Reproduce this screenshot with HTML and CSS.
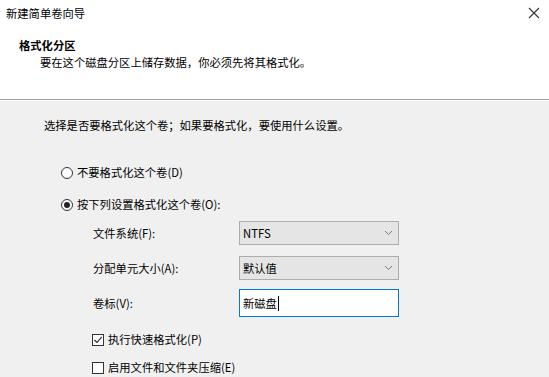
FILE: index.html
```html
<!DOCTYPE html>
<html lang="zh">
<head>
<meta charset="UTF-8">
<title>新建简单卷向导</title>
<link rel="stylesheet" href="styles.css">
</head>
<body>

<div class="titlebar">
  <span class="title">新建简单卷向导</span>
  <svg class="close" width="12" height="12" viewBox="0 0 12 12">
    <path d="M1 1 L11 11 M11 1 L1 11" stroke="#333" stroke-width="1.1" fill="none"/>
  </svg>
</div>

<!-- 页头 -->
<div class="header">
  <div class="header-title">格式化分区</div>
  <div class="header-sub">要在这个磁盘分区上储存数据，你必须先将其格式化。</div>
</div>

<!-- 内容 -->
<div class="content">
  <div class="intro">选择是否要格式化这个卷；如果要格式化，要使用什么设置。</div>

  <div class="radio-row first">
    <span class="radio"></span>
    <span>不要格式化这个卷(D)</span>
  </div>
  <div class="radio-row second">
    <span class="radio checked"></span>
    <span>按下列设置格式化这个卷(O):</span>
  </div>

  <div class="form">
    <div class="label row1">文件系统(F):</div>
    <div class="combo row1">
      <span>NTFS</span>
      <svg width="9" height="6" viewBox="0 0 9 6"><path d="M1 1 L4.5 4.5 L8 1" stroke="#777" fill="none"/></svg>
    </div>
    <div class="label row2">分配单元大小(A):</div>
    <div class="combo row2">
      <span>默认值</span>
      <svg width="9" height="6" viewBox="0 0 9 6"><path d="M1 1 L4.5 4.5 L8 1" stroke="#777" fill="none"/></svg>
    </div>
    <div class="label row3">卷标(V):</div>
    <div class="textbox row3"><span>新磁盘</span><i class="caret"></i></div>
  </div>

  <div class="check-row first">
    <span class="check">
      <svg width="10" height="10" viewBox="0 0 10 10"><path d="M1.5 5 L4 7.5 L8.8 1.8" stroke="#222" stroke-width="1.1" fill="none"/></svg>
    </span>
    <span>执行快速格式化(P)</span>
  </div>
  <div class="check-row second">
    <span class="check"></span>
    <span>启用文件和文件夹压缩(E)</span>
  </div>
</div>

</body>
</html>
```

FILE: styles.css
```css
body {
  margin: 0;
  font-family: "Noto Sans CJK SC", "Liberation Sans", sans-serif;
  font-size: 11.3px;
  color: #000;
  background: #f0f0f0;
  overflow: hidden;
}

.titlebar {
  height: 26px;
  background: #fff;
  display: flex;
  align-items: center;
  justify-content: space-between;
  padding: 0 9px 0 6px;
}

.title {
  line-height: 17px;
}

.header {
  background: #fff;
  padding: 11px 0 28px 19px;
  border-bottom: 1px solid #a0a0a0;
  box-shadow: 0 1px 0 #fff;
}

.header-title {
  font-weight: bold;
  line-height: 17px;
}

.header-sub {
  line-height: 17px;
  padding-left: 21px;
}

.content {
  padding: 17px 0 0 44px;
}

.intro {
  line-height: 17px;
}

.radio-row,
.check-row {
  display: flex;
  align-items: center;
  gap: 4px;
  line-height: 17px;
}

.radio-row { margin-left: 17px; }
.radio-row.first { margin-top: 30px; }
.radio-row.second { margin-top: 15px; }

.radio {
  width: 10px;
  height: 10px;
  border: 1px solid #333;
  border-radius: 50%;
  background: #fff;
  display: flex;
  align-items: center;
  justify-content: center;
}

.radio.checked::after {
  content: "";
  width: 6px;
  height: 6px;
  border-radius: 50%;
  background: #222;
}

.form {
  display: grid;
  grid-template-columns: 146px 160px;
  margin: 8px 0 0 49px;
  align-items: center;
}

.label {
  line-height: 17px;
}

.row1 { grid-row: 1; }
.row2 { grid-row: 2; margin-top: 11px; }
.row3 { grid-row: 3; margin-top: 9px; }

.combo {
  box-sizing: border-box;
  height: 24px;
  background: #e5e5e5;
  border: 1px solid #adadad;
  display: flex;
  align-items: center;
  justify-content: space-between;
  padding: 0 5px 0 3px;
}

.textbox {
  box-sizing: border-box;
  height: 28px;
  background: #fff;
  border: 1px solid #0078d7;
  display: flex;
  align-items: center;
  padding: 0 3px;
}

.caret {
  display: inline-block;
  width: 1px;
  height: 15px;
  background: #000;
  margin-left: 1px;
}

.check-row { margin-left: 48px; }
.check-row.first { margin-top: 14px; }
.check-row.second { margin-top: 11px; }

.check {
  box-sizing: border-box;
  width: 12px;
  height: 12px;
  border: 1px solid #333;
  background: #fff;
  display: flex;
  align-items: center;
  justify-content: center;
}
```
